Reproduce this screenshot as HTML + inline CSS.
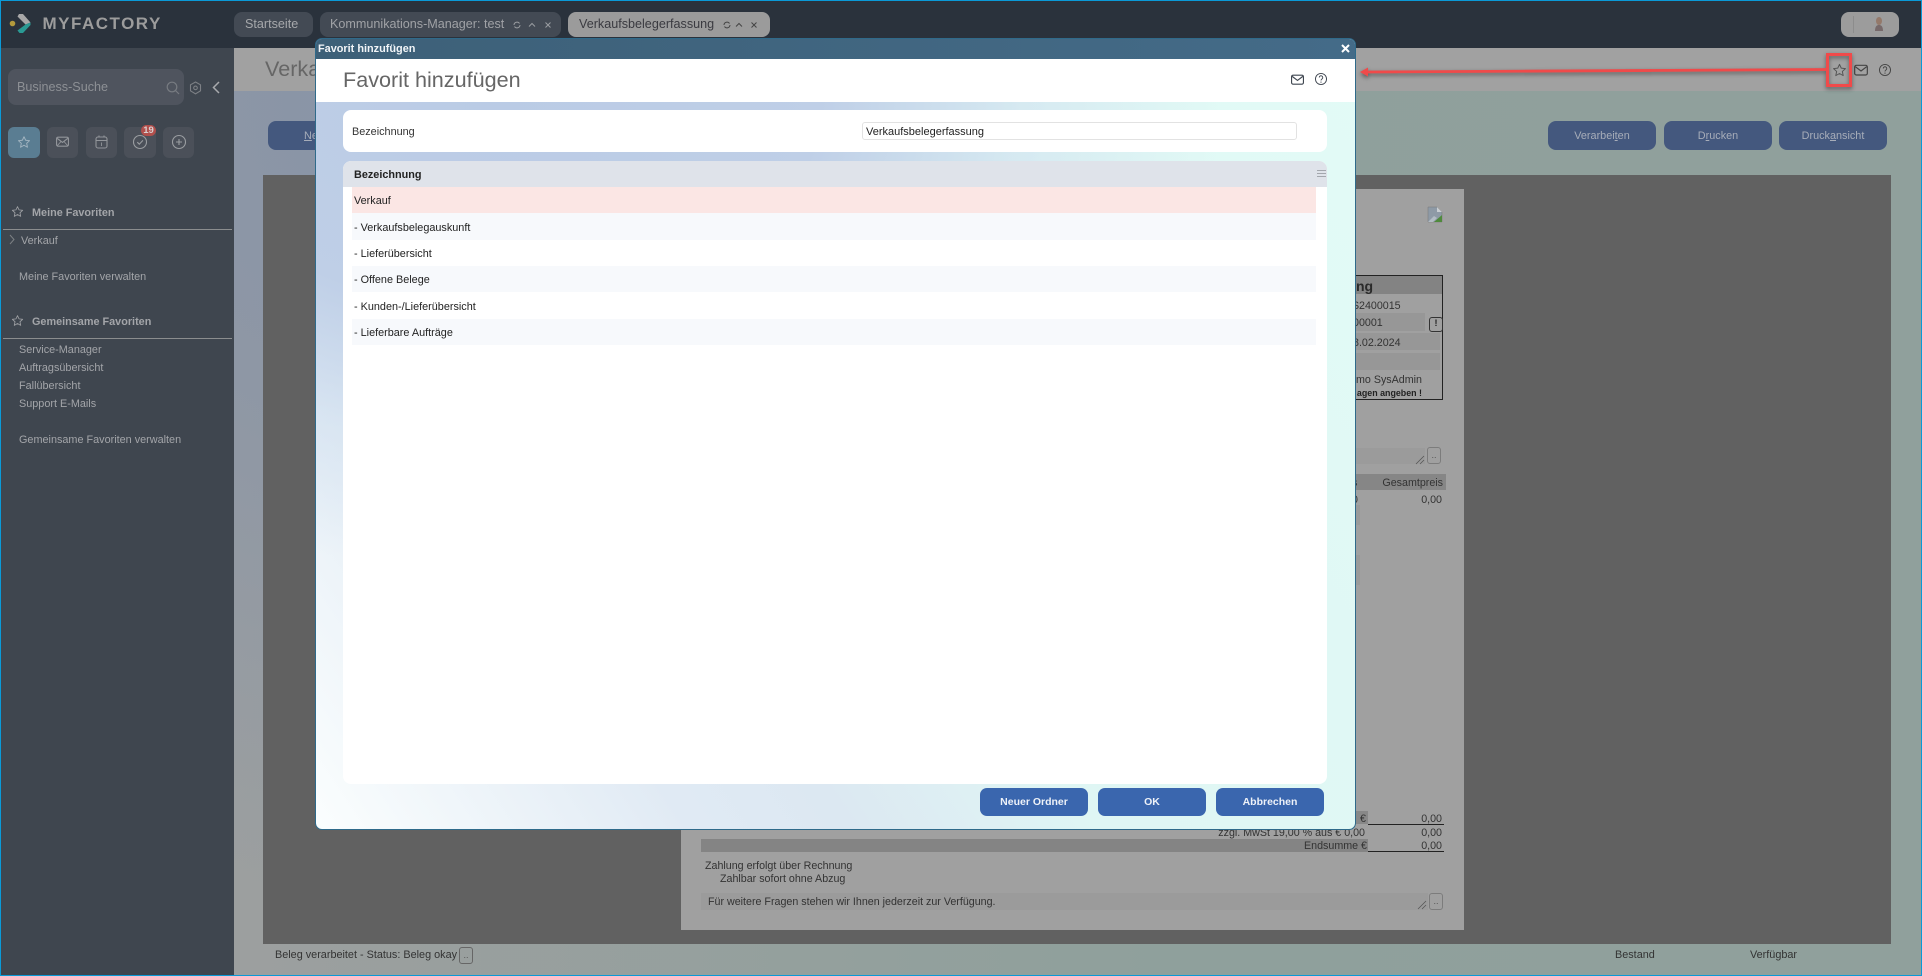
<!DOCTYPE html>
<html lang="de"><head><meta charset="utf-8"><title>Favorit hinzufügen</title>
<style>
html,body{margin:0;padding:0;width:1922px;height:976px;overflow:hidden;background:#3f464f}
body{position:relative;font-family:"Liberation Sans",Arial,sans-serif;font-size:10.85px}
.a{position:absolute;box-sizing:border-box}
.t{position:absolute;white-space:nowrap;line-height:14px;height:14px;margin-top:1px}
.r{text-align:right}
svg{position:absolute;overflow:visible;fill:none}
.side{color:#a3a5a9}
.tile{position:absolute;top:127px;height:31px;border-radius:6px;background:#4b5059}
.tab{position:absolute;top:12px;height:25px;border-radius:8px;background:#434a54}
.btn{position:absolute;top:121px;height:29px;border-radius:8px;background:#44587e;color:#a7adb9;text-align:center;line-height:30px}
.dbtn{position:absolute;top:788px;height:28px;width:108px;border-radius:7px;background:#3a66ae;color:#eef2f8;font-weight:bold;font-size:10.5px;text-align:center;line-height:29px}
.row{position:absolute;left:352px;width:964px;color:#222}
.row span{position:absolute;left:2px;top:50%;margin-top:-6px;line-height:14px;white-space:nowrap}
.doc{color:#333;font-size:10.7px}
.mini{position:absolute;border:1px solid #7c7c7c;border-radius:3px;color:#555;text-align:center;font-size:9px;line-height:11px}
</style></head>
<body>
<svg width="0" height="0" style="position:absolute"><defs>
<symbol id="star" viewBox="0 0 24 24"><polygon points="12,3 14.8,9 21.5,9.8 16.6,14.3 17.9,21 12,17.6 6.1,21 7.4,14.3 2.5,9.8 9.2,9" fill="none" stroke="currentColor" stroke-width="1.6" stroke-linejoin="round"/></symbol>
<symbol id="mail" viewBox="0 0 24 24"><rect x="2.5" y="5" width="19" height="14.5" rx="2.5" fill="none" stroke="currentColor" stroke-width="1.8"/><path d="M3.5 7l8.5 6.5L20.500 7" fill="none" stroke="currentColor" stroke-width="1.8"/></symbol>
<symbol id="help" viewBox="0 0 24 24"><circle cx="12" cy="12" r="9.500" fill="none" stroke="currentColor" stroke-width="1.600"/><path d="M9 9.500a3 3 0 1 1 4.600 2.500c-1 .7-1.600 1.200-1.600 2.500" fill="none" stroke="currentColor" stroke-width="1.600"/><circle cx="12" cy="17.300" r="1" fill="currentColor"/></symbol>
</defs></svg>

<!-- top bar -->
<div class="a" style="left:0;top:0;width:1922px;height:48px;background:#2a323c"></div>
<!-- sidebar -->
<div class="a" style="left:0;top:48px;width:234px;height:928px;background:#3f464f"></div>
<!-- main background -->
<div class="a" style="left:234px;top:91px;width:1688px;height:885px;background:radial-gradient(ellipse 900px 820px at 15% 0,#8793a8 0%,rgba(135,147,168,.65) 45%,rgba(135,147,168,0) 100%),linear-gradient(to right,#9c9f9f 0%,#8fa09c 55%,#90a09c 100%)"></div>
<div class="a" style="left:234px;top:48px;width:1688px;height:43px;background:#a1a1a1"></div>
<div class="t" style="left:265px;top:56px;height:24px;line-height:24px;font-size:21.6px;color:#666">Verkaufsbelegerfassung</div>

<!-- logo -->
<svg style="left:0;top:0" width="40" height="48"><circle cx="12.500" cy="23.500" r="2.800" fill="#b39a3c"/><polygon points="19,14 23,14 30.500,22.500 25.500,24.500 17.500,16.500" fill="#a8a8a8"/><polygon points="25.500,24.500 30.500,22.500 30.500,25 23,33 19.500,33 17.500,30.500" fill="#2a9a94"/></svg>
<div class="t" style="left:42.5px;top:13px;height:20px;line-height:20px;font-size:17px;font-weight:bold;letter-spacing:1.500px;color:#9c9c9c">MYFACTORY</div>

<!-- tabs -->
<div class="tab" style="left:234px;width:79px"></div>
<div class="t" style="left:245px;top:16px;font-size:12.600px;color:#a6a8ab">Startseite</div>
<div class="tab" style="left:320px;width:241px"></div>
<div class="t" style="left:330px;top:16px;font-size:12.600px;color:#a0a2a6">Kommunikations-Manager: test</div>
<svg style="left:513px;top:20px" width="44" height="10" stroke="#9a9da1" stroke-width="1"><path d="M1 5a3 3 0 0 1 5.500-1.500M7 5a3 3 0 0 1-5.500 1.500"/><path d="M16 6.500l3-3 3 3"/><path d="M32.500 2.500l5 5M37.500 2.500l-5 5"/></svg>
<div class="tab" style="left:568px;width:202px;background:#9b9b9b"></div>
<div class="t" style="left:579px;top:16px;font-size:12.600px;color:#3a3a40">Verkaufsbelegerfassung</div>
<svg style="left:723px;top:20px" width="40" height="10" stroke="#444" stroke-width="1"><path d="M1 5a3 3 0 0 1 5.500-1.500M7 5a3 3 0 0 1-5.500 1.500"/><path d="M13 6.500l3-3 3 3"/><path d="M28.500 2.500l5 5M33.500 2.500l-5 5"/></svg>

<!-- user -->
<div class="tab" style="left:1841px;width:58px;background:#9c9c9c"></div>
<div class="a" style="left:1853px;top:16px;width:1px;height:17px;background:#8c8c8c"></div>
<svg style="left:1873px;top:16px" width="12" height="16"><ellipse cx="6" cy="5" rx="3" ry="4" fill="#94796a"/><path d="M2 15c0-5 2-6 4-6s4 1 4 6z" fill="#77696a"/></svg>

<!-- sidebar: search -->
<div class="a" style="left:8px;top:69px;width:176px;height:36px;border-radius:8px;background:#4f545e"></div>
<div class="t" style="left:17px;top:79px;font-size:12.600px;color:#8d9095">Business-Suche</div>
<svg style="left:166px;top:81px" width="14" height="14" stroke="#777b81" stroke-width="1.200"><circle cx="6" cy="6" r="4.800"/><path d="M9.500 9.500l3.500 3.500"/></svg>
<svg style="left:189px;top:81px" width="13" height="14" stroke="#7d8085" stroke-width="1.100"><polygon points="6.500,1 11.500,3.800 11.500,9.800 6.500,12.800 1.500,9.800 1.500,3.800"/><circle cx="6.500" cy="6.900" r="1.800"/></svg>
<svg style="left:212px;top:81px" width="9" height="13" stroke="#a8aaad" stroke-width="1.500"><path d="M7 1L1.500 6.500 7 12"/></svg>

<!-- tiles -->
<div class="tile" style="left:8px;width:32px;background:#5a7d92"></div>
<svg style="left:17px;top:135px;color:#a3b5c1" width="14" height="14"><use href="#star"/></svg>
<div class="tile" style="left:47px;width:31px"></div>
<svg style="left:55px;top:134px;color:#92959a" width="15" height="15"><use href="#mail"/></svg>
<svg style="left:55px;top:134px" width="15" height="15" stroke="#92959a" stroke-width=".9"><path d="M2 12l4-4.500M13 12L9 7.500"/></svg>
<div class="tile" style="left:86px;width:31px"></div>
<svg style="left:95px;top:135px" width="14" height="14" stroke="#92959a" stroke-width="1.100"><rect x="1" y="2" width="11" height="11" rx="2"/><path d="M1 5.500h11M4 .5v2M9 .5v2"/><path d="M6.500 7.500v3.500" stroke-width=".9"/></svg>
<div class="tile" style="left:124px;width:32px"></div>
<svg style="left:132px;top:134px" width="16" height="16" stroke="#9a9da1" stroke-width="1.100"><circle cx="8" cy="8" r="6.500"/><path d="M5.300 8.200l2 2 3.600-3.800"/></svg>
<div class="a" style="left:141px;top:125px;width:15px;height:11px;border-radius:6px;background:#b04f4c;color:#d8d0d0;font-size:9.500px;font-weight:bold;text-align:center;line-height:11px">19</div>
<div class="tile" style="left:163px;width:31px"></div>
<svg style="left:171px;top:134px" width="16" height="16" stroke="#9a9da1" stroke-width="1.100"><circle cx="8" cy="8" r="6.500"/><path d="M8 5v6M5 8h6"/></svg>

<!-- favourites -->
<svg style="left:11px;top:205px;color:#9c9ea2" width="13" height="13"><use href="#star"/></svg>
<div class="t side" style="left:32px;top:205px;font-weight:bold">Meine Favoriten</div>
<div class="a" style="left:3px;top:229px;width:229px;height:1px;background:#8b8d8e"></div>
<svg style="left:9px;top:234px" width="6" height="11" stroke="#7d8084" stroke-width="1"><path d="M1 1l4 4.500L1 10"/></svg>
<div class="t side" style="left:21px;top:233px">Verkauf</div>
<div class="t side" style="left:19px;top:269px">Meine Favoriten verwalten</div>
<svg style="left:11px;top:314px;color:#9c9ea2" width="13" height="13"><use href="#star"/></svg>
<div class="t side" style="left:32px;top:314px;font-weight:bold">Gemeinsame Favoriten</div>
<div class="a" style="left:3px;top:338px;width:229px;height:1px;background:#8b8d8e"></div>
<div class="t side" style="left:19px;top:342px">Service-Manager</div>
<div class="t side" style="left:19px;top:360px">Auftragsübersicht</div>
<div class="t side" style="left:19px;top:378px">Fallübersicht</div>
<div class="t side" style="left:19px;top:396px">Support E-Mails</div>
<div class="t side" style="left:19px;top:432px">Gemeinsame Favoriten verwalten</div>

<!-- main action buttons -->
<div class="btn" style="left:268px;width:108px;text-align:left;padding-left:36px"><u>N</u>eu</div>
<div class="btn" style="left:1548px;width:108px">Verarbei<u>t</u>en</div>
<div class="btn" style="left:1664px;width:108px">D<u>r</u>ucken</div>
<div class="btn" style="left:1779px;width:108px">Druck<u>a</u>nsicht</div>

<!-- document area -->
<div class="a" style="left:263px;top:175px;width:1628px;height:769px;background:#616161"></div>
<div class="a" style="left:681px;top:189px;width:783px;height:741px;background:#a0a0a0"></div>
<svg style="left:1428px;top:207px" width="15" height="16"><path d="M0 0h9l5 5v10H0z" fill="#8e9aa6" stroke="#777" stroke-width=".5"/><path d="M6 15l8-7v7z" fill="#4f8a3c"/><path d="M0 15l6-6 3 2-4 4z" fill="#b2bcc4"/><path d="M9 0v5h5z" fill="#c9ced2"/></svg>

<div class="a" style="left:1340px;top:275px;width:103px;height:125px;border:1px solid #222"></div>
<div class="a" style="left:1341px;top:276px;width:101px;height:18px;background:#838383"></div>
<div class="t doc" style="left:1356px;top:278px;font-size:14px;font-weight:bold;color:#2a2a2a">ng</div>
<div class="t doc" style="left:1352px;top:298px">S</div>
<div class="t doc" style="left:1359px;top:298px">2400015</div>
<div class="a" style="left:1341px;top:313px;width:84px;height:18px;background:#979797"></div>
<div class="t doc" style="left:1353px;top:315px">00001</div>
<div class="mini" style="left:1429px;top:317px;width:12px;height:13px;border-color:#333;color:#222;font-weight:bold">!</div>
<div class="a" style="left:1341px;top:333px;width:99px;height:17px;background:#979797"></div>
<div class="t doc" style="left:1353px;top:335px">8.02.2024</div>
<div class="a" style="left:1341px;top:353px;width:99px;height:17px;background:#979797"></div>
<div class="t doc" style="left:1356px;top:372px">mo SysAdmin</div>
<div class="t doc r" style="left:1322px;top:385px;width:100px;font-size:8.900px;font-weight:bold;color:#222">agen angeben !</div>

<div class="a" style="left:1340px;top:448px;width:85px;height:16px;background:#9b9b9b"></div>
<svg style="left:1416px;top:456px" width="9" height="9" stroke="#555" stroke-width=".8"><path d="M0 8l8-8M4 8l4-4"/></svg>
<div class="mini" style="left:1427px;top:447px;width:12px;height:15px;line-height:14px">..</div>

<div class="a" style="left:1340px;top:474px;width:106px;height:16px;background:#868686"></div>
<div class="t doc" style="left:1352px;top:475px">s</div>
<div class="t doc r" style="left:1370px;top:475px;width:73px">Gesamtpreis</div>
<div class="t doc" style="left:1352px;top:492px">0</div>
<div class="t doc r" style="left:1380px;top:492px;width:62px">0,00</div>
<div class="a" style="left:1340px;top:505px;width:20px;height:20px;background:#9a9a9a"></div>
<div class="a" style="left:1340px;top:555px;width:20px;height:30px;background:#9a9a9a"></div>

<!-- totals -->
<div class="a" style="left:1340px;top:811px;width:28px;height:13px;background:#888"></div>
<div class="t doc" style="left:1360px;top:811px">€</div>
<div class="t doc r" style="left:1380px;top:811px;width:62px">0,00</div>
<div class="a" style="left:1368px;top:824px;width:76px;height:1px;background:#222"></div>
<div class="t doc r" style="left:1165px;top:825px;width:200px">zzgl. MwSt 19,00 % aus € 0,00</div>
<div class="t doc r" style="left:1380px;top:825px;width:62px">0,00</div>
<div class="a" style="left:701px;top:839px;width:667px;height:13px;background:#848484"></div>
<div class="t doc r" style="left:1267px;top:838px;width:100px">Endsumme €</div>
<div class="t doc r" style="left:1380px;top:838px;width:62px">0,00</div>
<div class="a" style="left:1368px;top:851px;width:76px;height:1px;background:#222"></div>
<div class="t doc" style="left:705px;top:858px">Zahlung erfolgt über Rechnung</div>
<div class="t doc" style="left:720px;top:871px">Zahlbar sofort ohne Abzug</div>
<div class="a" style="left:701px;top:893px;width:727px;height:17px;background:#9b9b9b"></div>
<div class="t doc" style="left:708px;top:894px">Für weitere Fragen stehen wir Ihnen jederzeit zur Verfügung.</div>
<svg style="left:1418px;top:901px" width="9" height="9" stroke="#555" stroke-width=".8"><path d="M0 8l8-8M4 8l4-4"/></svg>
<div class="mini" style="left:1429px;top:893px;width:12px;height:15px;line-height:14px">..</div>

<!-- status -->
<div class="t" style="left:275px;top:947px;color:#333">Beleg verarbeitet - Status: Beleg okay</div>
<div class="mini" style="left:459px;top:947px;width:12px;height:15px;line-height:14px;border-color:#666">..</div>
<div class="t" style="left:1615px;top:947px;color:#333">Bestand</div>
<div class="t" style="left:1750px;top:947px;color:#333">Verfügbar</div>

<!-- header icons & annotation -->
<svg style="left:1832px;top:62px;color:#555" width="15" height="16"><use href="#star"/></svg>
<svg style="left:1853px;top:62px;color:#444" width="16" height="16"><use href="#mail"/></svg>
<svg style="left:1878px;top:63px;color:#444" width="14" height="14"><use href="#help"/></svg>
<svg style="left:0;top:0;filter:drop-shadow(0 2px 2px rgba(0,0,0,.45))" width="1922" height="100"><path d="M1827 69.500L1366 72" stroke="#f04a4a" stroke-width="2.800"/><path d="M1360 72l8-4.500v9z" fill="#f04a4a"/><rect x="1827.500" y="54.500" width="23" height="31" stroke="#f04a4a" stroke-width="3"/></svg>

<!-- dialog -->
<div class="a" style="left:315px;top:38px;width:1041px;height:792px;border:1px solid #2f6a8a;border-radius:7px;overflow:hidden;background:radial-gradient(ellipse 800px 520px at 185px 62px,#bacbe5 0%,#bfcfe7 40%,rgba(205,221,238,.55) 65%,rgba(220,240,245,0) 90%),linear-gradient(56deg,#fbfefe 0%,#e0eaf4 24%,#dce8f2 34%,#dff6f4 50%,#e2fbf6 100%)">
  <div class="a" style="left:0;top:0;width:100%;height:20px;background:linear-gradient(to right,#3d6078,#446b88)"></div>
  <div class="a" style="left:0;top:20px;width:100%;height:43px;background:#fff"></div>
</div>
<div class="t" style="left:318px;top:41px;font-size:10.900px;font-weight:bold;color:#f2f5f8">Favorit hinzufügen</div>
<svg style="left:1341px;top:44px" width="9" height="9" stroke="#fff" stroke-width="2"><path d="M1 1l7 7M8 1l-7 7"/></svg>
<div class="t" style="left:343px;top:66px;height:26px;line-height:26px;font-size:21.600px;color:#666">Favorit hinzufügen</div>
<svg style="left:1290px;top:72px;color:#3f4650" width="15" height="15"><use href="#mail"/></svg>
<svg style="left:1314px;top:72px;color:#3f4650" width="14" height="14"><use href="#help"/></svg>

<div class="a" style="left:343px;top:110px;width:984px;height:42px;background:#fff;border-radius:8px"></div>
<div class="t" style="left:352px;top:124px;color:#333">Bezeichnung</div>
<div class="a" style="left:862px;top:122px;width:435px;height:18px;border:1px solid #e2e2e2;border-radius:3px;background:#fff"></div>
<div class="t" style="left:866px;top:124px;color:#222;font-size:11px">Verkaufsbelegerfassung</div>

<div class="a" style="left:343px;top:161px;width:984px;height:623px;background:#fff;border-radius:8px"></div>
<div class="a" style="left:343px;top:161px;width:984px;height:26px;background:#dfe3ea;border-radius:8px 8px 0 0"></div>
<div class="t" style="left:354px;top:167px;font-weight:bold;color:#222">Bezeichnung</div>
<svg style="left:1317px;top:169px" width="9" height="10" stroke="#a3a7ad" stroke-width="1"><path d="M0 1.500h9M0 4.500h9M0 7.500h9"/></svg>
<div class="row" style="top:187px;height:26px;background:#fbe6e4"><span>Verkauf</span></div>
<div class="row" style="top:213px;height:27px;background:#f7f9fc"><span>- Verkaufsbelegauskunft</span></div>
<div class="row" style="top:240px;height:26px"><span>- Lieferübersicht</span></div>
<div class="row" style="top:266px;height:26px;background:#f7f9fc"><span>- Offene Belege</span></div>
<div class="row" style="top:292px;height:27px"><span>- Kunden-/Lieferübersicht</span></div>
<div class="row" style="top:319px;height:26px;background:#f7f9fc"><span>- Lieferbare Aufträge</span></div>

<div class="dbtn" style="left:980px">Neuer Ordner</div>
<div class="dbtn" style="left:1098px">OK</div>
<div class="dbtn" style="left:1216px">Abbrechen</div>

<!-- window border -->
<div class="a" style="left:0;top:0;width:1922px;height:976px;border:1px solid #0a9ad8;border-top-width:1.500px;pointer-events:none"></div>
</body></html>
